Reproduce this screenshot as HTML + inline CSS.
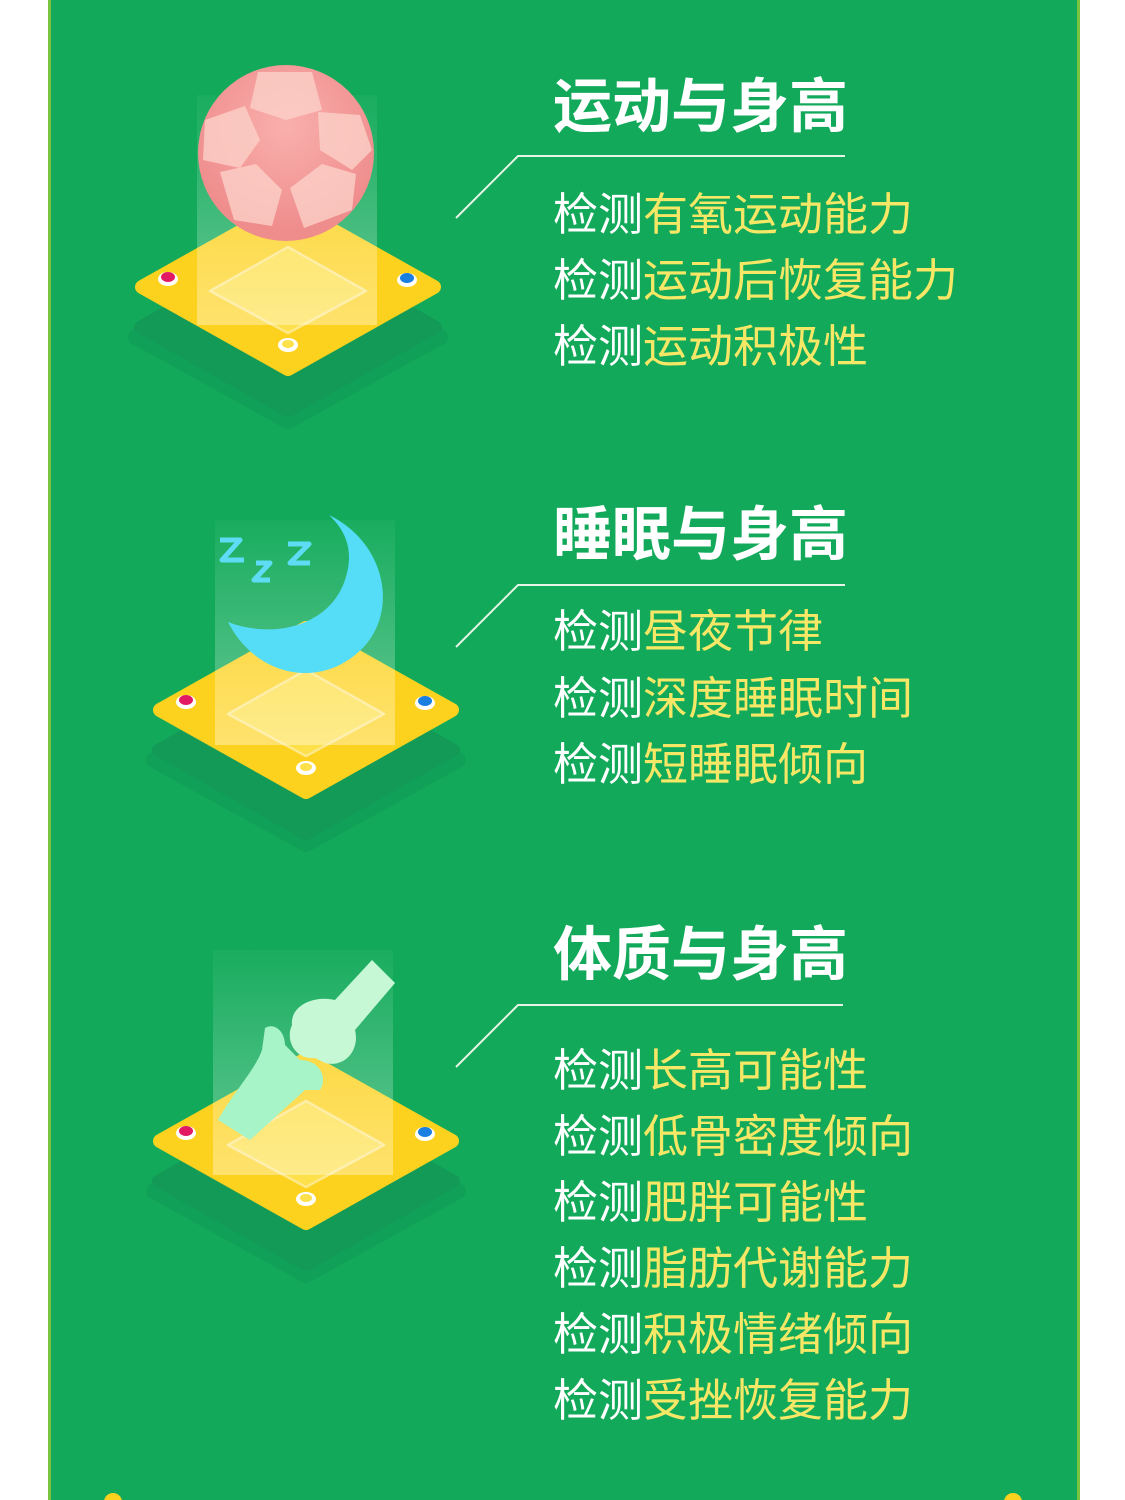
<!DOCTYPE html>
<html><head><meta charset="utf-8"><style>
html,body{margin:0;padding:0;background:#fff;}
body{width:1125px;height:1500px;position:relative;overflow:hidden;font-family:"Liberation Sans","Noto Sans CJK SC",sans-serif;}
.panel{position:absolute;left:48px;top:0;width:1026px;height:1500px;background:#12aa5a;border-left:3px solid #7cc33f;border-right:3px solid #7cc33f;}
.t{position:absolute;left:553px;color:#fff;font-weight:bold;font-size:59px;line-height:70px;white-space:nowrap;font-family:"Noto Sans CJK SC",sans-serif;}
.l{position:absolute;left:553px;color:#f6e766;font-size:45px;line-height:66px;white-space:nowrap;font-family:"Noto Sans CJK SC",sans-serif;}
.l b{color:#fff;font-weight:normal;}
svg{position:absolute;left:0;top:0;}
</style></head><body>
<div class="panel"></div>
<svg width="1125" height="1500" viewBox="0 0 1125 1500">
<defs>
<linearGradient id="glass" x1="0" y1="0" x2="0" y2="1">
<stop offset="0" stop-color="#fff" stop-opacity="0.03"/><stop offset="1" stop-color="#fff" stop-opacity="0.35"/></linearGradient>
<radialGradient id="ball" cx="0.5" cy="0.35" r="0.6"><stop offset="0" stop-color="#f9b0ad"/><stop offset="1" stop-color="#ef8c8c"/></radialGradient>
<g id="plat">
<polygon points="-152,50 0,-34 152,50 0,134" fill="#109a56" stroke="#109a56" stroke-width="16" stroke-linejoin="round" opacity="0.6"/>
<polygon points="-148,40 0,-44 148,40 0,124" fill="#139a57" stroke="#139a57" stroke-width="12" stroke-linejoin="round"/>
<polygon points="-146,0 0,-82 146,0 0,82" fill="#fdd21e" stroke="#fdd21e" stroke-width="14" stroke-linejoin="round"/>
<polygon points="-78,4 0,-40 78,4 0,46" fill="#fde04a" stroke="#fde88a" stroke-width="2.5" stroke-linejoin="round"/>
<ellipse cx="-120" cy="-8" rx="10" ry="7" fill="#fff"/><ellipse cx="-120" cy="-10" rx="7" ry="5" fill="#e21a64"/>
<ellipse cx="119" cy="-7" rx="10" ry="7" fill="#fff"/><ellipse cx="119" cy="-9" rx="7" ry="5" fill="#1a7fe0"/>
<ellipse cx="0" cy="58" rx="10" ry="7" fill="#fff"/><ellipse cx="0" cy="57" rx="6" ry="4" fill="#fde04a"/>
</g>
</defs>
<use href="#plat" x="288" y="287"/>
<rect x="197" y="95" width="180" height="230" fill="url(#glass)"/>
<circle cx="286" cy="153" r="88" fill="url(#ball)"/>
<g fill="#fcd1c8" opacity="0.8">
<polygon points="258,72 312,72 322,110 286,120 250,108"/>
<polygon points="205,120 245,106 260,140 240,168 203,160"/>
<polygon points="318,112 360,115 372,150 352,170 320,150"/>
<polygon points="220,172 256,164 282,190 272,226 234,220"/>
<polygon points="290,188 322,164 356,174 352,210 304,228"/>
</g>
<polyline points="456,218 518,156 845,156" fill="none" stroke="#e6f5e6" stroke-width="2"/>
<use href="#plat" x="306" y="710"/>
<rect x="215" y="520" width="180" height="225" fill="url(#glass)"/>
<path d="M329,515 C390,545 400,620 355,655 C315,688 255,675 228,622 C275,640 330,625 345,580 C355,550 345,530 329,515 Z" fill="#55ddf8"/>
<g fill="none" stroke="#5fdcf5" stroke-width="5" stroke-linejoin="round">
<path d="M220,540 H240 L222,560 H244"/><path d="M256,563 H270 L254,580 H270"/><path d="M288,544 H309 L290,563 H310"/>
</g>
<polyline points="456,647 518,585 845,585" fill="none" stroke="#e6f5e6" stroke-width="2"/>
<use href="#plat" x="306" y="1141"/>
<rect x="213" y="950" width="180" height="225" fill="url(#glass)"/>
<path d="M372,960 L395,983 L355,1030 C360,1050 345,1068 325,1063 L315,1058 C295,1060 285,1040 292,1025 C290,1005 315,995 335,1000 Z" fill="#c7f8d6"/>
<path d="M265,1028 C275,1022 285,1032 285,1045 L300,1060 C320,1060 328,1078 320,1090 L305,1090 L250,1140 L218,1120 C235,1090 255,1070 262,1050 Z" fill="#a6f4c8"/>
<polyline points="456,1067 518,1005 843,1005" fill="none" stroke="#e6f5e6" stroke-width="2"/>
<circle cx="113" cy="1502" r="9" fill="#fdd21e"/><circle cx="1013" cy="1502" r="9" fill="#fdd21e"/>
</svg>
<div class="t" style="top:67px">运动与身高</div>
<div class="l" style="top:178px"><b>检测</b>有氧运动能力</div>
<div class="l" style="top:244px"><b>检测</b>运动后恢复能力</div>
<div class="l" style="top:310px"><b>检测</b>运动积极性</div>
<div class="t" style="top:495px">睡眠与身高</div>
<div class="l" style="top:595px"><b>检测</b>昼夜节律</div>
<div class="l" style="top:662px"><b>检测</b>深度睡眠时间</div>
<div class="l" style="top:728px"><b>检测</b>短睡眠倾向</div>
<div class="t" style="top:915px">体质与身高</div>
<div class="l" style="top:1034px"><b>检测</b>长高可能性</div>
<div class="l" style="top:1100px"><b>检测</b>低骨密度倾向</div>
<div class="l" style="top:1166px"><b>检测</b>肥胖可能性</div>
<div class="l" style="top:1232px"><b>检测</b>脂肪代谢能力</div>
<div class="l" style="top:1298px"><b>检测</b>积极情绪倾向</div>
<div class="l" style="top:1364px"><b>检测</b>受挫恢复能力</div>
</body></html>
